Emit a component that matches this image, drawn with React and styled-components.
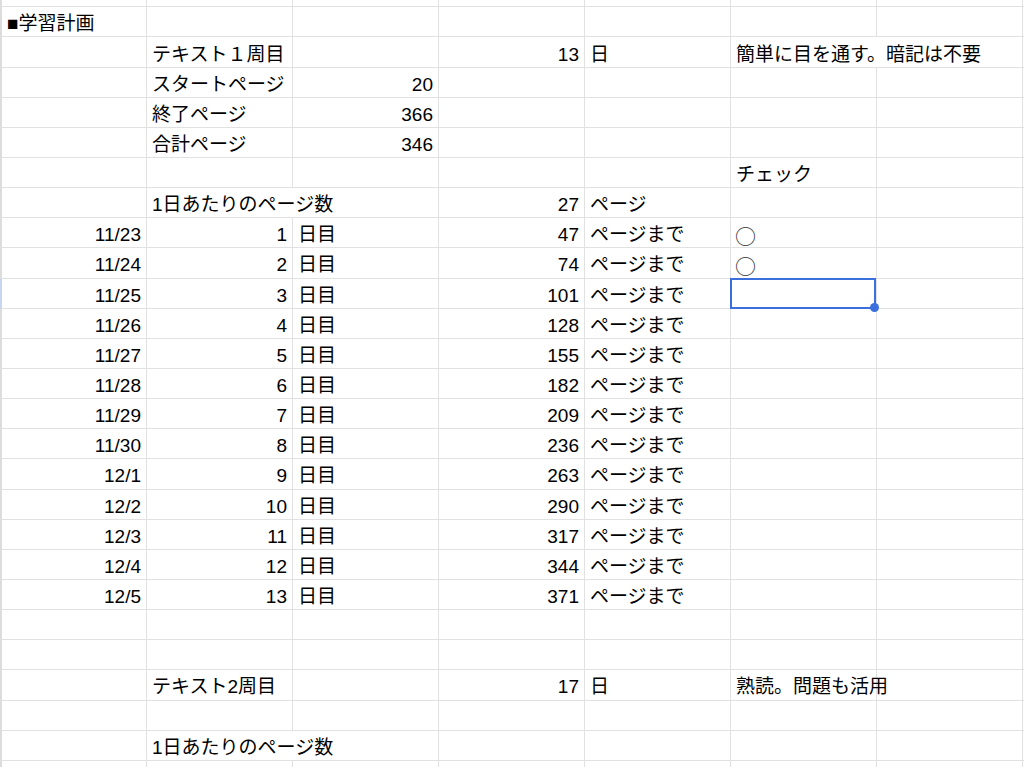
import React from 'react';
import styled, { createGlobalStyle } from 'styled-components';

const GlobalStyle = createGlobalStyle`
  html, body {
    margin: 0;
    padding: 0;
    background: #fff;
    overflow: hidden;
  }
  body {
    font-family: "Liberation Sans", "Noto Sans CJK JP", sans-serif;
  }
`;

const Sheet = styled.div`
  display: flex;
  flex-direction: column;
  width: 1024px;
  height: 767px;
  overflow: hidden;
  font-size: 19px;
  line-height: 20px;
  color: #000;
`;

const Row = styled.div`
  display: grid;
  grid-template-columns: 145px repeat(6, 146px);
  height: ${(p) => p.$height}px;
  flex-shrink: 0;
  box-sizing: border-box;
  border-bottom: 1px solid #e1e1e1;
  border-left: 2px solid ${(p) => (p.$active ? '#c7d5f1' : '#dcdcdc')};
`;

const Cell = styled.div`
  position: relative;
  grid-column: span ${(p) => p.$span || 1};
  display: flex;
  align-items: center;
  justify-content: ${(p) => (p.$right ? 'flex-end' : 'flex-start')};
  box-sizing: border-box;
  padding: 5px 5px 0 5px;
  border-right: 1px solid #e1e1e1;
  white-space: nowrap;
`;

const Mark = styled.span`
  font-family: "Noto Sans CJK JP", sans-serif;
  font-size: 21px;
  color: #333;
  margin-left: -1px;
`;

const Selection = styled.div`
  position: absolute;
  left: -1px;
  top: -1px;
  right: 0;
  bottom: -1px;
  border: 2px solid #3a6fdc;
  z-index: 2;
  pointer-events: none;
`;

const Handle = styled.div`
  position: absolute;
  right: -5px;
  bottom: -5px;
  width: 9px;
  height: 9px;
  border-radius: 50%;
  background: #3a6fdc;
`;

const ROW_H = 30.15;

const dates = ['11/23', '11/24', '11/25', '11/26', '11/27', '11/28', '11/29', '11/30', '12/1', '12/2', '12/3', '12/4', '12/5'];

// cells: [text, span] per column, empty strings for blank cells
const rows = [
  [['■学習計画']],
  [[''], ['テキスト１周目'], [''], ['13'], ['日'], ['簡単に目を通す。暗記は不要', 2]],
  [[''], ['スタートページ'], ['20']],
  [[''], ['終了ページ'], ['366']],
  [[''], ['合計ページ'], ['346']],
  [[''], [''], [''], [''], [''], ['チェック']],
  [[''], ['1日あたりのページ数', 2], ['27'], ['ページ']],
  ...dates.map((d, i) => [
    [d],
    [String(i + 1)],
    ['日目'],
    [String(20 + 27 * (i + 1))],
    ['ページまで'],
    [i < 2 ? '○' : ''],
  ]),
  [],
  [],
  [[''], ['テキスト2周目'], [''], ['17'], ['日'], ['熟読。問題も活用']],
  [],
  [[''], ['1日あたりのページ数', 2]],
];

const SELECTED = { row: 9, col: 5 };

const fillRow = (cells) => {
  const out = [...cells];
  let used = out.reduce((n, c) => n + (c[1] || 1), 0);
  while (used < 7) {
    out.push(['']);
    used += 1;
  }
  return out;
};

const App = () => {
  return (
    <>
      <GlobalStyle />
      <Sheet>
        <Row $height={7.3}>
          {fillRow([]).map((_, i) => (
            <Cell key={i} />
          ))}
        </Row>
        {rows.map((cells, r) => (
          <Row key={r} $height={ROW_H} $active={r === SELECTED.row}>
            {fillRow(cells).map(([text, span], c) => {
              const right = /^[\d/]+$/.test(text);
              const selected = r === SELECTED.row && c === SELECTED.col;
              return (
                <Cell key={c} $span={span} $right={right}>
                  {text === '○' ? <Mark>○</Mark> : text}
                  {selected && (
                    <Selection>
                      <Handle />
                    </Selection>
                  )}
                </Cell>
              );
            })}
          </Row>
        ))}
        <Row $height={10}>
          {fillRow([]).map((_, i) => (
            <Cell key={i} />
          ))}
        </Row>
      </Sheet>
    </>
  );
};

export default App;
